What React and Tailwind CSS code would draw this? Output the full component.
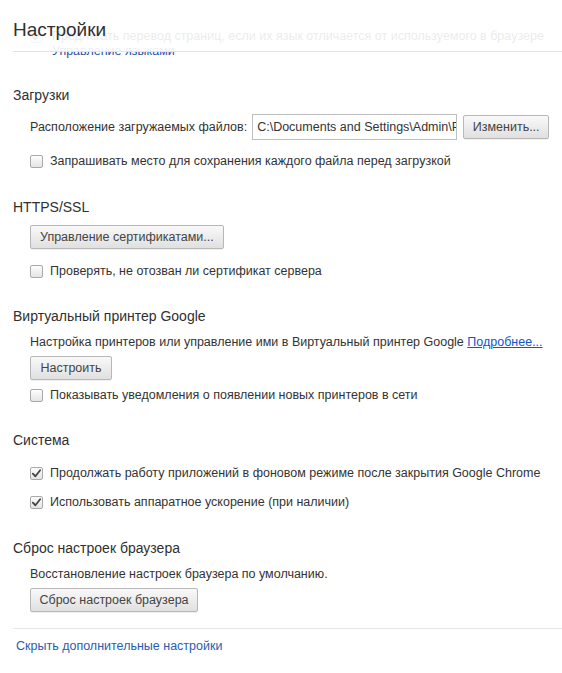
import React from "react";

const font = { fontFamily: '"Liberation Sans", Arial, sans-serif' };

const Checkbox = ({ checked = false }) => (
  <span className="w-[13px] h-[13px] shrink-0 rounded-[2px] border border-[#a9a9a9] bg-gradient-to-b from-[#fdfdfd] to-[#e4e4e4] flex items-center justify-center">
    {checked && (
      <svg viewBox="0 0 12 12" className="w-[11px] h-[11px]">
        <path d="M2 6.2 L4.8 9 L10 2.5" fill="none" stroke="#444" strokeWidth="2" strokeLinecap="round" strokeLinejoin="round" />
      </svg>
    )}
  </span>
);

const CheckRow = ({ label, checked, className = "" }) => (
  <label className={`flex items-center gap-[7px] h-[20px] text-[12.5px] text-[#333] whitespace-nowrap ${className}`}>
    <Checkbox checked={checked} />
    <span>{label}</span>
  </label>
);

const Button = ({ children, className = "" }) => (
  <button className={`h-[24px] px-[9px] rounded-[2px] border border-[#b7b7b7] bg-gradient-to-b from-[#f9f9f9] to-[#e0e0e0] text-[12.5px] text-[#444] whitespace-nowrap shadow-[0_1px_0_rgba(0,0,0,0.06)] ${className}`}>
    {children}
  </button>
);

const Heading = ({ children, className = "" }) => (
  <h3 className={`h-[20px] leading-[20px] text-[14px] text-[#303030] ${className}`}>{children}</h3>
);

export default function App() {
  return (
    <div className="relative w-[562px] h-[673px] bg-white overflow-hidden" style={font}>
      {/* header overlay */}
      <div className="absolute top-0 left-0 right-0 h-[52px] bg-white/[0.9] z-10 pl-[13px]">
        <div className="h-full border-b border-[#e4e4e4] flex items-end pb-[12px]">
          <h1 className="text-[19px] leading-none text-[#303030]">Настройки</h1>
        </div>
      </div>

      <div className="pl-[13px] pt-[26px]">
        {/* scrolled content under header */}
        <div className="pl-[17px]">
          <CheckRow checked label="Предлагать перевод страниц, если их язык отличается от используемого в браузере" className="!gap-[9px]" />
          <div className="pl-[22px] -mt-[5px] h-[20px] leading-[20px] text-[12.5px] text-[#1f4fa6]">Управление языками</div>
        </div>

        {/* Downloads */}
        <Heading className="mt-[24px]">Загрузки</Heading>
        <div className="pl-[17px]">
          <div className="mt-[9px] flex items-center text-[12.5px] text-[#333] whitespace-nowrap">
            <span>Расположение загружаемых файлов:</span>
            <div className="ml-[5px] w-[205px] h-[26px] border border-[#bfbfbf] bg-white px-[4px] leading-[24px] overflow-hidden">
              C:\Documents and Settings\Admin\Рабочий стол
            </div>
            <Button className="ml-[6px] w-[86px] !px-0">Изменить...</Button>
          </div>
          <CheckRow label="Запрашивать место для сохранения каждого файла перед загрузкой" className="mt-[11px]" />
        </div>

        {/* HTTPS */}
        <Heading className="mt-[26px]">HTTPS/SSL</Heading>
        <div className="pl-[17px]">
          <Button className="mt-[8px]">Управление сертификатами...</Button>
          <CheckRow label="Проверять, не отозван ли сертификат сервера" className="mt-[12px]" />
        </div>

        {/* Cloud print */}
        <Heading className="mt-[25px]">Виртуальный принтер Google</Heading>
        <div className="pl-[17px]">
          <p className="mt-[6px] h-[20px] leading-[20px] text-[12.5px] text-[#333] whitespace-nowrap">
            Настройка принтеров или управление ими в Виртуальный принтер Google{" "}
            <a className="text-[#1155cc] underline">Подробнее...</a>
          </p>
          <Button className="mt-[4px] w-[82px] !px-0">Настроить</Button>
          <CheckRow label="Показывать уведомления о появлении новых принтеров в сети" className="mt-[5px]" />
        </div>

        {/* System */}
        <Heading className="mt-[25px]">Система</Heading>
        <div className="pl-[17px]">
          <CheckRow checked label="Продолжать работу приложений в фоновом режиме после закрытия Google Chrome" className="mt-[13px]" />
          <CheckRow checked label="Использовать аппаратное ускорение (при наличии)" className="mt-[9px]" />
        </div>

        {/* Reset */}
        <Heading className="mt-[26px]">Сброс настроек браузера</Heading>
        <div className="pl-[17px]">
          <p className="mt-[6px] h-[20px] leading-[20px] text-[12.5px] text-[#333]">Восстановление настроек браузера по умолчанию.</p>
          <Button className="mt-[4px] w-[168px] !px-0">Сброс настроек браузера</Button>
        </div>

        <div className="mt-[16px] border-t border-[#e6e6e6]" />
        <a className="block mt-[7px] ml-[3px] h-[20px] leading-[20px] text-[12.5px] text-[#2a5db0]">Скрыть дополнительные настройки</a>
      </div>
    </div>
  );
}
